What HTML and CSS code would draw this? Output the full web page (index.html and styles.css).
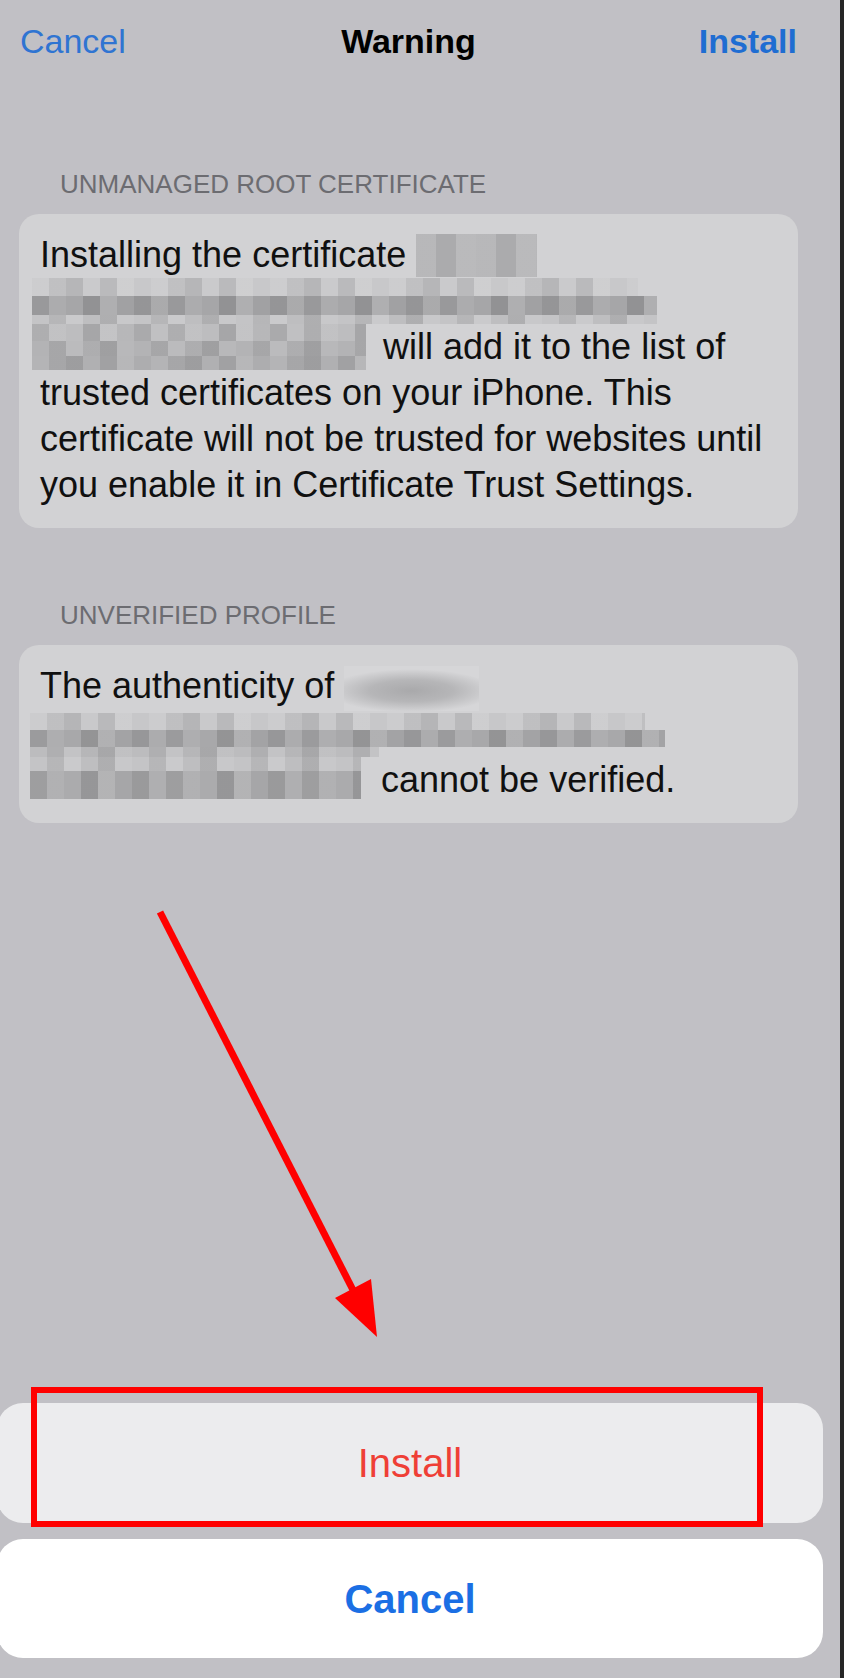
FILE: index.html
```html
<!DOCTYPE html>
<html lang="en">
<head>
<meta charset="utf-8">
<title>Warning</title>
<link rel="stylesheet" href="styles.css">
</head>
<body>
<div class="screen">
  <header class="nav">
    <span class="nav-left">Cancel</span>
    <span class="nav-title">Warning</span>
    <span class="nav-right">Install</span>
  </header>

  <div class="section-header first">UNMANAGED ROOT CERTIFICATE</div>
  <div class="card">
    <p class="card-text">Installing the certificate <span class="mz mz-a"></span><br><span class="mz mz-b"></span><br><span class="mz mz-c"></span> will add it to the list of<br>trusted certificates on your iPhone. This certificate will not be trusted for websites until you enable it in Certificate Trust Settings.</p>
  </div>

  <div class="section-header second">UNVERIFIED PROFILE</div>
  <div class="card">
    <p class="card-text">The authenticity of <span class="mz mz-blur"></span><br><span class="mz mz-d"></span><br><span class="mz mz-e"></span> cannot be verified.</p>
  </div>

  <div class="sheet">
    <div class="sheet-btn install">Install</div>
    <div class="sheet-btn cancel">Cancel</div>
  </div>

  <div class="highlight-box"></div>
  <svg class="arrow" viewBox="140 890 260 460" width="260" height="460" aria-hidden="true">
    <line x1="160" y1="912" x2="354" y2="1292" stroke="#ff0000" stroke-width="7"/>
    <polygon points="335,1298 371,1279 377,1337" fill="#ff0000"/>
  </svg>
</div>
</body>
</html>
```
FILE: styles.css
```css
:root {
  --p1: repeating-linear-gradient(90deg, rgba(255,255,255,.09) 0 17px, rgba(0,0,0,.04) 17px 34px, rgba(0,0,0,.09) 34px 51px, rgba(255,255,255,.04) 51px 68px, rgba(0,0,0,.07) 68px 85px, rgba(255,255,255,.12) 85px 102px, rgba(0,0,0,0) 102px 119px);
  --p2: repeating-linear-gradient(90deg, rgba(0,0,0,.08) 0 17px, rgba(255,255,255,.07) 17px 34px, rgba(0,0,0,0) 34px 51px, rgba(0,0,0,.12) 51px 68px, rgba(255,255,255,.10) 68px 85px, rgba(0,0,0,.03) 85px 102px, rgba(0,0,0,.10) 102px 119px, rgba(255,255,255,.05) 119px 136px);
  --p3: repeating-linear-gradient(90deg, rgba(0,0,0,0) 0 17px, rgba(0,0,0,.07) 17px 34px, rgba(255,255,255,.11) 34px 51px, rgba(0,0,0,.03) 51px 68px, rgba(0,0,0,.11) 68px 85px, rgba(255,255,255,.07) 85px 102px);
}

html, body {
  margin: 0;
  padding: 0;
}

body {
  background: #262626;
  width: 844px;
  height: 1678px;
  overflow: hidden;
}

.screen {
  position: relative;
  width: 840px;
  height: 1678px;
  background: #c1c0c5;
  display: flex;
  flex-direction: column;
  font-family: "Liberation Sans", Arial, sans-serif;
}

.nav {
  display: grid;
  grid-template-columns: 1fr auto 1fr;
  width: 818px;
  box-sizing: border-box;
  padding: 21px 21px 0 20px;
  font-size: 34px;
  line-height: 40px;
}

.nav-left {
  color: #2f74d2;
}

.nav-title {
  color: #000;
  font-weight: 700;
}

.nav-right {
  color: #1f6dd2;
  font-weight: 700;
  text-align: right;
}

.section-header {
  margin-left: 60px;
  font-size: 26px;
  line-height: 32px;
  color: #6c6c71;
}

.section-header.first {
  margin-top: 107px;
}

.section-header.second {
  margin-top: 71px;
}

.card {
  margin: 14px 0 0 19px;
  width: 779px;
  box-sizing: border-box;
  padding: 18px 21px 20px;
  background: #d2d2d4;
  border-radius: 20px;
}

.card-text {
  margin: 0;
  font-size: 36px;
  line-height: 46px;
  color: #101010;
}

.mz {
  display: inline-block;
  vertical-align: top;
  height: 46px;
}

.mz-a {
  width: 121px;
  height: 43px;
  margin-top: 2px;
  background:
    repeating-linear-gradient(90deg, rgba(255,255,255,.05) 0 20px, rgba(0,0,0,.05) 20px 40px, rgba(255,255,255,.08) 40px 60px),
    #b4b4b6;
}

.mz-b {
  width: 625px;
  margin-left: -8px;
  background:
    linear-gradient(90deg, rgba(210,210,212,0) 0 606px, #d2d2d4 606px) 0 0 / 100% 18px no-repeat,
    var(--p1) 0 0 / 100% 18px no-repeat,
    var(--p2) 0 18px / 100% 19px no-repeat,
    var(--p3) 0 37px / 100% 9px no-repeat,
    linear-gradient(#c8c8ca 0 18px, #a6a6a8 18px 37px, #c4c4c6 37px);
}

.mz-c {
  width: 334px;
  margin-left: -8px;
  margin-right: 7px;
  background:
    var(--p2) 0 0 / 100% 17px no-repeat,
    var(--p3) 0 17px / 100% 15px no-repeat,
    var(--p1) 0 32px / 100% 14px no-repeat,
    linear-gradient(#bdbdbf 0 17px, #b3b3b5 17px 32px, #adadaf 32px);
}

.mz-blur {
  width: 135px;
  height: 45px;
  margin-top: 3px;
  background:
    radial-gradient(ellipse 62% 48% at 50% 55%, #a9a9ab 0%, #b6b6b8 50%, rgba(214,214,216,0) 100%),
    #d6d6d8;
}

.mz-d {
  width: 635px;
  height: 44px;
  margin-left: -10px;
  margin-top: 2px;
  background:
    linear-gradient(90deg, rgba(210,210,212,0) 0 349px, #d2d2d4 349px) 0 34px / 100% 10px no-repeat,
    linear-gradient(90deg, rgba(210,210,212,0) 0 615px, #d2d2d4 615px) 0 0 / 100% 17px no-repeat,
    var(--p1) 0 0 / 100% 17px no-repeat,
    var(--p2) 0 17px / 100% 17px no-repeat,
    var(--p3) 0 34px / 100% 10px no-repeat,
    linear-gradient(#c7c7c9 0 17px, #a8a8aa 17px 34px, #bcbcbe 34px);
}

.mz-e {
  width: 331px;
  height: 42px;
  margin-left: -10px;
  margin-right: 10px;
  background:
    var(--p3) 0 0 / 100% 14px no-repeat,
    var(--p2) 0 14px / 100% 28px no-repeat,
    linear-gradient(#c4c4c6 0 14px, #ababad 14px);
}

.sheet {
  margin-top: auto;
  margin-left: -3px;
  width: 826px;
  padding-bottom: 20px;
  display: flex;
  flex-direction: column;
  gap: 16px;
}

.sheet-btn {
  display: flex;
  align-items: center;
  justify-content: center;
  border-radius: 26px;
  font-size: 40px;
  line-height: 1;
}

.sheet-btn.install {
  height: 120px;
  background: #ececee;
  color: #ef3f36;
}

.sheet-btn.cancel {
  height: 119px;
  background: #ffffff;
  color: #1b6fe4;
  font-weight: 700;
}

.highlight-box {
  position: absolute;
  left: 31px;
  top: 1387px;
  width: 732px;
  height: 140px;
  box-sizing: border-box;
  border: 6px solid #ff0000;
}

.arrow {
  position: absolute;
  left: 140px;
  top: 890px;
  overflow: visible;
}
```
